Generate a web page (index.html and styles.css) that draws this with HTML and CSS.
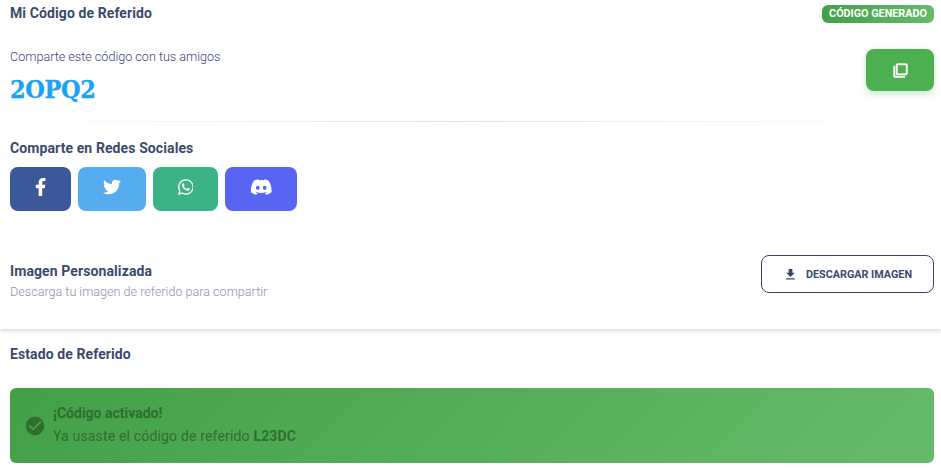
FILE: index.html
```html
<!DOCTYPE html>
<html>
  <head>
    <meta charset="utf-8">
    <title>Mi Código de Referido</title>
    <link rel="stylesheet" href="styles.css">
  </head>
  <body>
    <div class="referral-card">
      <div class="card-header">
        <h6 class="section-title">Mi Código de Referido</h6>
        <span class="status-badge">CÓDIGO GENERADO</span>
      </div>
      <div class="code-row">
        <div class="code-info">
          <p class="code-label">Comparte este código con tus amigos</p>
          <div class="code-value">2OPQ2</div>
        </div>
        <button class="copy-button">
          <svg class="copy-icon" viewBox="0 0 24 24"><path d="M3 5H1v16c0 1.1.9 2 2 2h16v-2H3V5zm18-4H7c-1.1 0-2 .9-2 2v14c0 1.1.9 2 2 2h14c1.1 0 2-.9 2-2V3c0-1.1-.9-2-2-2zm0 16H7V3h14v14z"/></svg>
        </button>
      </div>
      <hr class="divider" />
      <h6 class="section-title">Comparte en Redes Sociales</h6>
      <div class="social-row">
        <button class="social-button facebook">
          <svg class="social-icon" viewBox="0 0 320 512"><path d="M279.14 288l14.22-92.66h-88.91v-60.13c0-25.35 12.42-50.06 52.24-50.06h40.42V6.26S260.43 0 225.36 0c-73.22 0-121.08 44.38-121.08 124.72v70.62H22.89V288h81.39v224h100.17V288z"/></svg>
        </button>
        <button class="social-button twitter">
          <svg class="social-icon" viewBox="0 0 512 512"><path d="M459.37 151.716c.325 4.548.325 9.097.325 13.645 0 138.72-105.583 298.558-298.558 298.558-59.452 0-114.68-17.219-161.137-47.106 8.447.974 16.568 1.299 25.34 1.299 49.055 0 94.213-16.568 130.274-44.832-46.132-.975-84.792-31.188-98.112-72.772 6.498.974 12.995 1.624 19.818 1.624 9.421 0 18.843-1.3 27.614-3.573-48.081-9.747-84.143-51.98-84.143-102.985v-1.299c13.969 7.797 30.214 12.67 47.431 13.319-28.264-18.843-46.781-51.005-46.781-87.391 0-19.492 5.197-37.36 14.294-52.954 51.655 63.675 129.3 105.258 216.365 109.807-1.624-7.797-2.599-15.918-2.599-24.04 0-57.828 46.782-104.934 104.934-104.934 30.213 0 57.502 12.67 76.67 33.137 23.715-4.548 46.456-13.32 66.599-25.34-7.798 24.366-24.366 44.833-46.132 57.827 21.117-2.273 41.584-8.122 60.426-16.243-14.292 20.791-32.161 39.308-52.628 54.253z"/></svg>
        </button>
        <button class="social-button whatsapp">
          <svg class="social-icon" viewBox="0 0 448 512"><path d="M380.9 97.1C339 55.1 283.2 32 223.9 32c-122.4 0-222 99.6-222 222 0 39.1 10.2 77.3 29.6 111L0 480l117.7-30.9c32.4 17.7 68.9 27 106.1 27h.1c122.3 0 224.1-99.6 224.1-222 0-59.3-25.2-115-67.1-157zm-157 341.6c-33.2 0-65.7-8.9-94-25.7l-6.7-4-69.8 18.3L72 359.2l-4.4-7c-18.5-29.4-28.2-63.3-28.2-98.2 0-101.7 82.8-184.5 184.6-184.5 49.3 0 95.6 19.2 130.4 54.1 34.8 34.9 56.2 81.2 56.1 130.5 0 101.8-84.9 184.6-186.6 184.6zm101.2-138.2c-5.5-2.8-32.8-16.2-37.9-18-5.1-1.9-8.8-2.8-12.5 2.8-3.7 5.6-14.3 18-17.6 21.8-3.2 3.7-6.5 4.2-12 1.4-32.6-16.3-54-29.1-75.5-66-5.7-9.8 5.7-9.1 16.3-30.3 1.8-3.7.9-6.9-.5-9.7-1.4-2.8-12.5-30.1-17.1-41.2-4.5-10.8-9.1-9.3-12.5-9.5-3.2-.2-6.9-.2-10.6-.2-3.7 0-9.7 1.4-14.8 6.9-5.1 5.6-19.4 19-19.4 46.3 0 27.3 19.9 53.7 22.6 57.4 2.8 3.7 39.1 59.7 94.8 83.8 35.2 15.2 49 16.5 66.6 13.9 10.7-1.6 32.8-13.4 37.4-26.4 4.6-13 4.6-24.1 3.2-26.4-1.3-2.5-5-3.9-10.5-6.6z"/></svg>
        </button>
        <button class="social-button discord">
          <svg class="social-icon" viewBox="0 0 640 512"><path d="M524.531,69.836a1.5,1.5,0,0,0-.764-.7A485.065,485.065,0,0,0,404.081,32.03a1.816,1.816,0,0,0-1.923.91,337.461,337.461,0,0,0-14.9,30.6,447.848,447.848,0,0,0-134.426,0,309.541,309.541,0,0,0-15.135-30.6,1.89,1.89,0,0,0-1.924-.91A483.689,483.689,0,0,0,116.085,69.137a1.712,1.712,0,0,0-.788.676C39.068,183.651,18.186,294.69,28.43,404.354a2.016,2.016,0,0,0,.765,1.375A487.666,487.666,0,0,0,176.02,479.918a1.9,1.9,0,0,0,2.063-.676A348.2,348.2,0,0,0,208.12,430.4a1.86,1.86,0,0,0-1.019-2.588,321.173,321.173,0,0,1-45.868-21.853,1.885,1.885,0,0,1-.185-3.126c3.082-2.309,6.166-4.711,9.109-7.137a1.819,1.819,0,0,1,1.9-.256c96.229,43.917,200.41,43.917,295.5,0a1.812,1.812,0,0,1,1.924.233c2.944,2.426,6.027,4.851,9.132,7.16a1.884,1.884,0,0,1-.162,3.126,301.407,301.407,0,0,1-45.89,21.83,1.875,1.875,0,0,0-1,2.611,391.055,391.055,0,0,0,30.014,48.815,1.864,1.864,0,0,0,2.063.7A486.048,486.048,0,0,0,610.7,405.729a1.882,1.882,0,0,0,.765-1.352C623.729,277.594,590.933,167.465,524.531,69.836ZM222.491,337.58c-28.972,0-52.844-26.587-52.844-59.239S193.056,219.1,222.491,219.1c29.665,0,53.306,26.82,52.843,59.239C275.334,310.993,251.924,337.58,222.491,337.58Zm195.38,0c-28.971,0-52.843-26.587-52.843-59.239S388.437,219.1,417.871,219.1c29.667,0,53.307,26.82,52.844,59.239C470.715,310.993,447.538,337.58,417.871,337.58Z"/></svg>
        </button>
      </div>
      <div class="image-row">
        <div class="image-info">
          <h6 class="section-title">Imagen Personalizada</h6>
          <p class="image-hint">Descarga tu imagen de referido para compartir</p>
        </div>
        <button class="download-button">
          <svg class="download-icon" viewBox="0 0 24 24"><path d="M19 9h-4V3H9v6H5l7 7 7-7zM5 18v2h14v-2H5z"/></svg>
          DESCARGAR IMAGEN
        </button>
      </div>
    </div>
    <div class="status-section">
      <h6 class="section-title">Estado de Referido</h6>
      <div class="status-alert">
        <svg class="alert-icon" viewBox="0 0 24 24"><path d="M12 2C6.48 2 2 6.48 2 12s4.48 10 10 10 10-4.48 10-10S17.52 2 12 2zm-2 15l-5-5 1.41-1.41L10 14.17l7.59-7.59L19 8l-9 9z"/></svg>
        <div class="alert-body">
          <div class="alert-title">¡Código activado!</div>
          <div class="alert-text">Ya usaste el código de referido <strong>L23DC</strong></div>
        </div>
      </div>
    </div>
  </body>
</html>
```

FILE: styles.css
```css
* {
  box-sizing: border-box;
}

body {
  font-family: Roboto, Arial, sans-serif;
  background-color: #fff;
  margin: 0;
  padding: 0;
  overflow: hidden;
}

.section-title {
  margin: 0;
  font-size: 14px;
  line-height: 22px;
  font-weight: 700;
  letter-spacing: 0.1px;
  color: #3a4b6d;
}

.referral-card {
  height: 329px;
  padding: 2px 7px 0 10px;
  background-color: #fff;
  box-shadow: 0 2px 4px rgba(0, 0, 0, 0.15);
}

.card-header {
  display: flex;
  justify-content: space-between;
  align-items: flex-start;
}

.status-badge {
  margin-top: 3px;
  padding: 0 7px;
  height: 18px;
  line-height: 18px;
  font-size: 10.8px;
  font-weight: 700;
  color: #fff;
  border-radius: 6px;
  background: linear-gradient(90deg, #43a047, #66bb6a);
}

.code-row {
  display: flex;
  justify-content: space-between;
  align-items: flex-start;
  margin-top: 25px;
}

.code-label {
  margin: -1px 0 0;
  font-size: 12.6px;
  line-height: 18px;
  font-weight: 300;
  color: #3c3f7a;
}

.code-value {
  margin-top: 6px;
  font-family: "DejaVu Serif Condensed", "DejaVu Serif", serif;
  font-size: 25px;
  line-height: 36px;
  font-weight: 700;
  letter-spacing: -0.4px;
  color: #1da1f2;
  -webkit-text-stroke: 0.3px #1da1f2;
}

.copy-button {
  width: 68px;
  height: 42px;
  border: none;
  border-radius: 8px;
  background-color: #4caf50;
  box-shadow: 0 3px 6px rgba(76, 175, 80, 0.3);
  display: flex;
  align-items: center;
  justify-content: center;
}

.copy-icon {
  width: 15px;
  height: 15px;
  fill: #fff;
  stroke: #fff;
  stroke-width: 1;
}

.divider {
  height: 1px;
  margin: 13px 0 0;
  border: none;
  background: linear-gradient(90deg, transparent, rgba(0, 0, 0, 0.1), transparent 97%);
}

.divider + .section-title {
  margin-top: 15px;
}

.social-row {
  display: flex;
  gap: 7px;
  margin-top: 8px;
}

.social-button {
  height: 44px;
  padding: 0 0 4px;
  border: none;
  border-radius: 8px;
  display: flex;
  align-items: center;
  justify-content: center;
}

.social-icon {
  height: 18px;
  fill: #fff;
}

.facebook {
  width: 61px;
  background-color: #3b5998;
}

.twitter {
  width: 68px;
  background-color: #55acee;
}

.whatsapp {
  width: 65px;
  background-color: #3cb386;
}

.discord {
  width: 72px;
  background-color: #5865f2;
}

.image-row {
  display: flex;
  justify-content: space-between;
  align-items: flex-start;
  margin-top: 44px;
}

.image-info {
  padding-top: 5px;
}

.image-hint {
  margin: 1px 0 0;
  font-size: 12.6px;
  line-height: 18px;
  font-weight: 300;
  color: #8f93ab;
}

.download-button {
  width: 173px;
  height: 38px;
  border: 1px solid #344767;
  border-radius: 8px;
  background-color: #fff;
  color: #3a4b6d;
  font-family: Roboto, Arial, sans-serif;
  font-size: 10.8px;
  font-weight: 700;
  display: flex;
  align-items: center;
  justify-content: center;
  gap: 8px;
}

.download-icon {
  width: 15px;
  height: 15px;
  fill: #344767;
}

.status-section {
  padding: 14px 7px 0 10px;
}

.status-alert {
  display: flex;
  align-items: center;
  gap: 7px;
  height: 75px;
  margin-top: 23px;
  padding: 0 14px;
  border-radius: 6px;
  background: linear-gradient(135deg, #43a047, #66bb6a);
  color: #2e6e32;
}

.alert-icon {
  width: 22px;
  height: 22px;
  fill: #2e6e32;
}

.alert-body {
  margin-top: -2px;
}

.alert-title {
  font-size: 14px;
  line-height: 20px;
  font-weight: 700;
}

.alert-text {
  margin-top: 3px;
  font-size: 14px;
  line-height: 20px;
  letter-spacing: 0.17px;
}
```
